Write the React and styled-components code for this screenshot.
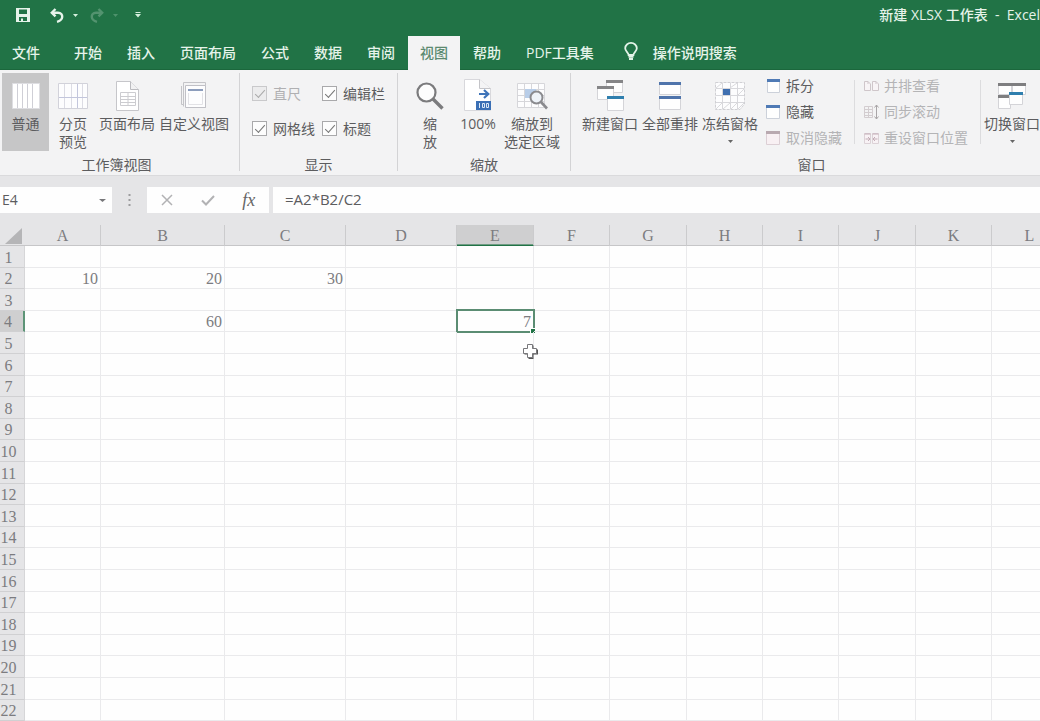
import React from "react";
import styled, { createGlobalStyle, css } from "styled-components";

const GREEN = "#217346";
const UI = `"Open Sans", "Noto Sans CJK SC", sans-serif`;
const SHEET = `"Liberation Serif", "Noto Sans CJK SC", serif`;

const GlobalStyle = createGlobalStyle`
  *, *::before, *::after { box-sizing: border-box; }
  body { margin: 0; font-family: ${UI}; font-size: 14px; color: #5c5c5e; background: #fefefe; }
  button, input { font: inherit; color: inherit; margin: 0; padding: 0; border: 0; background: none; }
  svg { display: block; flex: none; }
`;

const Page = styled.div`
  display: flex;
  flex-direction: column;
  height: 100vh;
  overflow: hidden;
`;

/* ---------- title bar and tabs ---------- */

const Header = styled.header`
  flex: none;
  background: ${GREEN};
  color: #e6f3ea;
  border-bottom: 1px solid #1b673c;
`;

const TitleBar = styled.div`
  display: flex;
  align-items: center;
  justify-content: space-between;
  height: 30px;
  margin-bottom: 6px;
  padding-left: 16px;
`;

const QuickAccess = styled.div`
  display: flex;
  align-items: center;
`;

const QuickButton = styled.button`
  display: flex;
  margin-right: ${(p) => p.$gap || 0}px;
  opacity: ${(p) => (p.disabled ? 0.25 : 1)};
`;

const Title = styled.div`
  white-space: pre;
  font-weight: 500;
  line-height: 20px;
`;

const Tabs = styled.nav`
  display: flex;
  gap: 1px;
  height: 33px;
`;

const Tab = styled.button`
  display: flex;
  align-items: center;
  gap: 15px;
  padding: 0 12px 2px;
  white-space: nowrap;
  font-weight: 500;
  ${(p) => p.$file && css`width: 61px;`}
  ${(p) => p.$tell && css`margin-left: 5px;`}
  ${(p) => p.$active && css`
    height: 34px;
    background: #f3f3f4;
    color: #5c8a70;
  `}
`;

/* ---------- ribbon ---------- */

const Ribbon = styled.section`
  flex: none;
  display: flex;
  padding-top: 3px;
  height: 106px;
  overflow: hidden;
  background: #f3f3f4;
  border-bottom: 1px solid #dadadc;
`;

const Group = styled.div`
  flex: none;
  display: flex;
  flex-direction: column;
  align-items: center;
  gap: 5px;
  height: 98px;
  padding: ${(p) => p.$pad};
  border-right: ${(p) => (p.$last ? "0" : "1px solid #d3d3d5")};
`;

const GroupBody = styled.div`
  flex: none;
  display: flex;
  height: 78px;
`;

const GroupLabel = styled.div`
  flex: none;
  line-height: 18px;
`;

const BigButton = styled.button`
  display: flex;
  flex-direction: column;
  align-items: center;
  gap: 3px;
  width: ${(p) => p.$w}px;
  padding-top: 6px;
  line-height: 18px;
  white-space: pre;
  background: ${(p) => (p.$active ? "#c6c6c7" : "transparent")};
`;

const MenuMark = styled.span`
  padding-top: 4px;
`;

const IconBox = styled.span`
  display: grid;
  place-items: center;
  height: 33px;
`;

const CheckGrid = styled.div`
  display: grid;
  grid-template-columns: auto auto;
  grid-template-rows: 35px 35px;
  column-gap: 7px;
  align-items: center;
  padding-top: 3px;
`;

const CheckLabel = styled.label`
  display: flex;
  align-items: center;
  gap: 6px;
  line-height: 18px;
  white-space: nowrap;
  color: ${(p) => (p.$off ? "#b0b0b2" : "inherit")};
`;

const CheckBox = styled.input`
  appearance: none;
  display: grid;
  place-items: center;
  width: 15px;
  height: 15px;
  border: 1px solid #a9a9ab;
  background: #fdfdfd;
  &:disabled { border-color: #c9c9cb; background: #ececed; }
  &:checked::before {
    content: "";
    width: 10px;
    height: 5px;
    margin-bottom: 3px;
    border-left: 1px solid #777;
    border-bottom: 1px solid #777;
    transform: rotate(-48deg);
  }
  &:disabled:checked::before { border-color: #aaa; }
`;

const Stack = styled.div`
  display: flex;
  flex-direction: column;
  padding-left: ${(p) => p.$left}px;
  padding-right: 12px;
`;

const SmallButton = styled.button`
  display: flex;
  align-items: center;
  gap: 5px;
  height: 26px;
  line-height: 18px;
  white-space: nowrap;
  &:disabled { color: #b4b4b6; }
`;

const Divider = styled.span`
  width: 1px;
  height: 64px;
  margin-top: 7px;
  background: #dcdcde;
`;

/* ---------- formula bar ---------- */

const FormulaBar = styled.section`
  flex: none;
  display: flex;
  height: 49px;
  padding: 11px 0 12px;
  background: #e5e5e7;
`;

const NameBox = styled.div`
  display: flex;
  align-items: center;
  width: 112px;
  padding: 0 6px 0 2px;
  background: #fefefe;
`;

const TextField = styled.input`
  flex: 1;
  min-width: 0;
  height: 26px;
  padding-bottom: 2px;
  outline: 0;
`;

const Grip = styled.span`
  display: grid;
  place-items: center;
  width: 35px;
`;

const FormulaTools = styled.div`
  display: flex;
  align-items: center;
  justify-content: space-around;
  width: 122px;
  margin-right: 4px;
  background: #fefefe;
`;

const FormulaField = styled(TextField)`
  padding-left: 12px;
  font-size: 15px;
  background: #fefefe;
`;

const ToolButton = styled.button`
  display: grid;
  place-items: center;
  width: 24px;
  height: 24px;
  font: italic 18px/20px "Liberation Serif", serif;
  color: #666;
`;

/* ---------- sheet ---------- */

const SheetArea = styled.main`
  flex: 1;
  min-height: 0;
  overflow: hidden;
`;

const Sheet = styled.table`
  width: 100%;
  table-layout: fixed;
  border-collapse: separate;
  border-spacing: 0;
  font: 16px/18px ${SHEET};
  color: #7c7c80;
`;

const Col = styled.col`
  width: ${(p) => p.$w}px;
`;

const Corner = styled.td`
  padding: 2px 2px 0 5px;
  background: #e5e5e7;
  border-bottom: 1px solid #c6c6c8;
`;

const ColHead = styled.th`
  height: 21px;
  padding: 2px 0 0;
  font-weight: 400;
  background: ${(p) => (p.$active ? "#cfcfd0" : "#e5e5e7")};
  border-right: 1px solid #cbcbcd;
  border-bottom: 1px solid ${(p) => (p.$active ? GREEN : "#c6c6c8")};
  box-shadow: ${(p) => (p.$active ? "inset 0 -1px #6f9c83" : "none")};
`;

const Row = styled.tr`
  height: 22px;
  &:nth-child(5n + 2), &:nth-child(5n + 4) { height: 21px; }
`;

const RowHead = styled.th`
  padding: 2px 7px 0 0;
  font-weight: 400;
  background: ${(p) => (p.$active ? "#cfcfd0" : "#e5e5e7")};
  border-right: ${(p) => (p.$active ? `2px solid #5d9477` : "1px solid #d6d6d8")};
  border-bottom: 1px solid #d0d0d2;
`;

const Cell = styled.td`
  position: relative;
  padding: 2px 2px 0 0;
  text-align: right;
  border-right: 1px solid #eaeaec;
  border-bottom: 1px solid #eaeaec;
`;

const Selection = styled.span`
  position: absolute;
  inset: -2px -2px -2px -1px;
  border: 2px solid #5b8d73;
  &::after {
    content: "";
    position: absolute;
    right: -2px;
    bottom: -2px;
    width: 5px;
    height: 5px;
    background: ${GREEN};
    border: solid #fff;
    border-width: 1px 0 0 1px;
  }
`;

const Pointer = styled.svg`
  position: absolute;
  top: 32px;
  left: 65px;
  z-index: 1;
`;

/* ---------- icons ---------- */

const SaveIcon = () => (
  <svg width="14" height="14" viewBox="0 0 14 14">
    <path fill="#e6f3ea" fillRule="evenodd" d="M0 0H14V14H0ZM3 1.5V6H11V1.5ZM3 9V13H5V10.5H7V13H11V9Z" />
  </svg>
);
const UndoIcon = ({ flip }) => (
  <svg width="14" height="15" viewBox="0 0 14 15">
    <g transform={flip ? "matrix(-1 0 0 1 14 0)" : undefined} fill="none" stroke="#e6f3ea" strokeWidth="2.4">
      <path d="M5.5 1L1.8 4.7L5.5 8.4" />
      <path d="M2 4.7H8C11 4.7 12.4 6.8 12.2 9C12 11.5 10 13 7 13.8" />
    </g>
  </svg>
);
const Caret = ({ color = "#666", w = 5 }) => (
  <svg width={w} height="3" viewBox="0 0 6 3" preserveAspectRatio="none"><path d="M0 0H6L3 3Z" fill={color} /></svg>
);
const CustomizeIcon = () => (
  <svg width="6" height="6" viewBox="0 0 6 6"><path d="M0.5 0H5.5V1H0.5ZM0 2H6L3 5.5Z" fill="#d5f0dd" /></svg>
);
const BulbIcon = () => (
  <svg width="14" height="19" viewBox="0 0 14 19" fill="none" stroke="#e3f4e8" strokeWidth="1.8">
    <path d="M4.6 13C4.6 10.5 1.2 9.5 1.2 6.3A5.8 5.4 0 0 1 12.8 6.3C12.8 9.5 9.4 10.5 9.4 13Z" />
    <path d="M4.5 14.8H9.5M5 17H9" strokeWidth="1.8" />
  </svg>
);
const NormalIcon = () => (
  <svg width="28" height="26" viewBox="0 0 28 26">
    <path d="M0.5 0.5H27.5V25.5H0.5Z" fill="#fff" stroke="#dedee2" />
    <path d="M5.5 1V25M10.5 1V25M15.5 1V25M20.5 1V25" stroke="#cfcfd6" />
  </svg>
);
const PageBreakIcon = () => (
  <svg width="30" height="26" viewBox="0 0 30 26">
    <path d="M0.5 0.5H29.5V25.5H0.5Z" fill="#fdfdfe" stroke="#d2d2da" />
    <path d="M6.5 1V25M13.5 1V25M24.5 1V25" stroke="#dcdce4" />
    <path d="M19.5 1V25M1 14.5H29" stroke="#c3c6dc" />
  </svg>
);
const PageLayoutIcon = () => (
  <svg width="23" height="30" viewBox="0 0 23 30">
    <path d="M0.5 0.5H14.5L22.5 8.5V29.5H0.5Z" fill="#fff" stroke="#c6c6ca" />
    <path d="M14.5 0.5V8.5H22.5" fill="#f2f2f3" stroke="#bcbcc0" />
    <path d="M4.5 11.5H19.5V24.5H4.5ZM4.5 15.5H19.5M4.5 18.5H19.5M4.5 21.5H19.5M12 11.5V24.5" fill="none" stroke="#ccccd0" />
  </svg>
);
const CustomViewIcon = () => (
  <svg width="27" height="27" viewBox="0 0 27 27">
    <path d="M2.5 0.5H24.5V4M0.5 4V22.5H3M24.5 4V26M2.5 0.5V24.5" fill="none" stroke="#c4c4c8" />
    <path d="M4.5 3.5H24.5V25.5H4.5Z" fill="#fdfdfe" stroke="#c0c0c6" />
    <path d="M7 8H22" stroke="#8c9dbc" strokeWidth="2" />
    <path d="M7.5 11V22.5H21.5V11" fill="none" stroke="#e2e2e6" />
  </svg>
);
const ZoomIcon = () => (
  <svg width="28" height="28" viewBox="0 0 28 28">
    <circle cx="10.5" cy="10.5" r="9" fill="#fdfdfd" stroke="#7b7b7d" strokeWidth="2.2" />
    <path d="M17 17L26.5 26.5" stroke="#7b7b7d" strokeWidth="3.4" />
  </svg>
);
const HundredIcon = () => (
  <svg width="28" height="33" viewBox="0 0 28 33">
    <path d="M0.5 0.5H15.5L26.5 9.5V31.5H0.5Z" fill="#fff" stroke="#d8d8dc" />
    <path d="M15.5 0.5V9.5H26.5" fill="#f4f4f5" stroke="#c4c4c8" />
    <path d="M15 15H24M20 11L24.3 15L20 19" fill="none" stroke="#3f74b8" strokeWidth="2.2" />
    <path d="M12 22H27V31H12Z" fill="#3a6fb5" />
    <path d="M15.5 24V29M18.5 24.5H20.5V28.5H18.5ZM22.5 24.5H24.5V28.5H22.5Z" fill="none" stroke="#dce8f6" />
  </svg>
);
const ZoomSelectionIcon = () => (
  <svg width="31" height="28" viewBox="0 0 31 28">
    <path d="M0.5 1.5H27.5V25.5H0.5Z" fill="#fdfdfe" />
    <path d="M0.5 1.5H27.5V25.5H0.5ZM0.5 7.5H27.5M0.5 13.5H27.5M0.5 19.5H27.5M7.5 1.5V25.5M14.5 1.5V25.5M21.5 1.5V25.5" fill="none" stroke="#d6d6da" />
    <path d="M8 7H19V16H8Z" fill="#b8cde8" />
    <circle cx="19.5" cy="15.5" r="6" fill="#eef3f9" stroke="#8a8a8e" strokeWidth="2" />
    <path d="M24 20L30 26.5" stroke="#8a8a8e" strokeWidth="2.6" />
  </svg>
);
const Win = ({ x, y, w, h, bar }) => (
  <>
    <path d={`M${x + 0.5} ${y + 0.5}h${w - 1}v${h - 1}h${1 - w}Z`} fill="#fefefe" stroke="#d4d4d8" />
    <path d={`M${x} ${y}h${w}v3h${-w}Z`} fill={bar} />
  </>
);
const NewWindowIcon = () => (
  <svg width="27" height="31" viewBox="0 0 27 31">
    <Win x={9} y={0} w={17} h={13} bar="#858587" />
    <Win x={0} y={6} w={17} h={14} bar="#858587" />
    <Win x={10} y={16} w={17} h={15} bar="#2f7fae" />
  </svg>
);
const ArrangeIcon = () => (
  <svg width="22" height="28" viewBox="0 0 22 28">
    <Win x={0} y={0} w={22} h={13} bar="#4f74ab" />
    <Win x={0} y={14} w={22} h={14} bar="#4f74ab" />
  </svg>
);
const FreezeIcon = () => (
  <svg width="30" height="28" viewBox="0 0 30 28">
    <path d="M0.5 0.5H29.5V22L25 27.5H0.5Z" fill="#fdfdfe" stroke="#d0d0d4" strokeDasharray="3 1" />
    <path d="M1 6.5H29M1 13.5H29M1 20.5H29M7.5 1V27M15.5 1V27M22.5 1V27" stroke="#d8d8dc" />
    <path d="M1 6L7 1M15 6L22 1M1 27L7 21M8 27L15 21M16 27L22 21M23 27L29 21M23 13L29 7" stroke="#dadadd" />
    <path d="M8 7H15V13H8Z" fill="#3f6fb0" />
  </svg>
);
const SwitchIcon = () => (
  <svg width="28" height="26" viewBox="0 0 28 26">
    <Win x={0} y={0} w={14} h={12} bar="#7e7e80" />
    <Win x={14} y={0} w={14} h={12} bar="#7e7e80" />
    <Win x={0} y={12} w={13} h={14} bar="#7e7e80" />
    <Win x={11} y={9} w={14} h={13} bar="#2f7fae" />
  </svg>
);
const PaneIcon = ({ w = 14, bar = "#4f7ab5", fill = "#fefefe", line = "#ccd1da" }) => (
  <svg width="15" height="14" viewBox="0 0 15 14">
    <path d={`M${14 - w}.5 0.5H13.5V13.5H${14 - w}.5Z`} fill={fill} stroke={line} />
    <path d={`M${14 - w} 0H14V3H${14 - w}Z`} fill={bar} />
  </svg>
);
const SideBySideIcon = () => (
  <svg width="15" height="12" viewBox="0 0 15 12" fill="#f8f4f6" stroke="#cfc6ca">
    <path d="M0.5 1.5H4L6.5 4V10.5H0.5ZM8.5 1.5H12L14.5 4V10.5H8.5ZM4 1.5V4M12 1.5V4" />
  </svg>
);
const SyncIcon = () => (
  <svg width="15" height="16" viewBox="0 0 15 16" fill="none" stroke="#d3cdd0">
    <path d="M0.5 2.5H8.5V13.5H0.5ZM0.5 5.5H8.5M0.5 8.5H8.5M0.5 11.5H8.5M4.5 2.5V13.5" />
    <path d="M12.5 1V15M10.5 3.5L12.5 1L14.5 3.5M10.5 12.5L12.5 15L14.5 12.5" stroke="#a9a5a7" />
  </svg>
);
const ResetIcon = () => (
  <svg width="15" height="11" viewBox="0 0 15 11" fill="#f8f2f5" stroke="#dcd2d7">
    <path d="M0.5 0.5H6.5V10.5H0.5ZM8.5 0.5H14.5V10.5H8.5Z" />
    <path d="M0.5 1H6.5M8.5 1H14.5M1.5 6H6M4 4L6 6L4 8M13.5 6H9M11 4L9 6L11 8" stroke="#c2adb6" fill="none" />
  </svg>
);
const DotsIcon = () => (
  <svg width="3" height="13" viewBox="0 0 3 13"><path d="M1.5 0V13" stroke="#9c9c9e" strokeWidth="2" strokeDasharray="2 3" /></svg>
);
const CrossIcon = () => (
  <svg width="12" height="12" viewBox="0 0 12 12"><path d="M1 1L11 11M11 1L1 11" stroke="#b2b2b4" strokeWidth="1.5" /></svg>
);
const TickIcon = () => (
  <svg width="14" height="11" viewBox="0 0 14 11"><path d="M1 5.5L5 9.5L13 1" fill="none" stroke="#b2b2b4" strokeWidth="2" /></svg>
);
const CornerIcon = () => (
  <svg width="17" height="16" viewBox="0 0 17 16"><path d="M17 0V16H0Z" fill="#b5b5b7" /></svg>
);
const PlusPointer = () => (
  <Pointer width="17" height="17" viewBox="0 0 17 17">
    <path d="M6.5 2.5H11.5V6.5H16V11.5H11.5V16H6.5V11.5H2.5V6.5H6.5Z" fill="#555" />
    <path d="M5.5 1.5H10.5V5.5H14.5V10.5H10.5V14.5H5.5V10.5H1.5V5.5H5.5Z" fill="#fff" stroke="#77777a" />
  </Pointer>
);

/* ---------- data ---------- */

const TABS = ["开始", "插入", "页面布局", "公式", "数据", "审阅", "视图", "帮助", "PDF工具集"];
const COLUMNS = [
  ["A", 76], ["B", 124], ["C", 121], ["D", 111], ["E", 77], ["F", 76],
  ["G", 77], ["H", 76], ["I", 76], ["J", 77], ["K", 76], ["L", 76],
];
const ROWS = Array.from({ length: 22 }, (_, i) => i + 1);
const VALUES = { A2: 10, B2: 20, C2: 30, B4: 60, E4: 7 };

const Big = ({ icon, label, w, active, menu }) => (
  <BigButton $w={w} $active={active}>
    <IconBox>{icon}</IconBox>
    <span>{label}</span>
    {menu && <MenuMark><Caret /></MenuMark>}
  </BigButton>
);

const Check = ({ label, disabled }) => (
  <CheckLabel $off={disabled}>
    <CheckBox type="checkbox" defaultChecked disabled={disabled} />
    {label}
  </CheckLabel>
);

const Small = ({ icon, label, disabled }) => (
  <SmallButton disabled={disabled}>{icon}{label}</SmallButton>
);

export default function App() {
  return (
    <Page>
      <GlobalStyle />
      <Header>
        <TitleBar>
          <QuickAccess>
            <QuickButton aria-label="保存" $gap={20}><SaveIcon /></QuickButton>
            <QuickButton aria-label="撤消" $gap={9}><UndoIcon /></QuickButton>
            <QuickButton aria-label="撤消列表" $gap={12}><Caret color="#d5f0dd" /></QuickButton>
            <QuickButton aria-label="恢复" disabled $gap={9}><UndoIcon flip /></QuickButton>
            <QuickButton aria-label="恢复列表" disabled $gap={17}><Caret color="#d5f0dd" /></QuickButton>
            <QuickButton aria-label="自定义"><CustomizeIcon /></QuickButton>
          </QuickAccess>
          <Title>{"新建 XLSX 工作表  -  Excel"}</Title>
        </TitleBar>
        <Tabs>
          <Tab $file>文件</Tab>
          {TABS.map((t) => <Tab key={t} $active={t === "视图"}>{t}</Tab>)}
          <Tab $tell><BulbIcon />操作说明搜索</Tab>
        </Tabs>
      </Header>

      <Ribbon>
        <Group $pad="0 8px 0 2px">
          <GroupBody>
            <Big w={47} active icon={<NormalIcon />} label="普通" />
            <Big w={48} icon={<PageBreakIcon />} label={"分页\n预览"} />
            <Big w={60} icon={<PageLayoutIcon />} label="页面布局" />
            <Big w={74} icon={<CustomViewIcon />} label="自定义视图" />
          </GroupBody>
          <GroupLabel>工作簿视图</GroupLabel>
        </Group>
        <Group $pad="0 12px">
          <GroupBody>
            <CheckGrid>
              <Check label="直尺" disabled />
              <Check label="编辑栏" />
              <Check label="网格线" />
              <Check label="标题" />
            </CheckGrid>
          </GroupBody>
          <GroupLabel>显示</GroupLabel>
        </Group>
        <Group $pad="0 9px">
          <GroupBody>
            <Big w={46} icon={<ZoomIcon />} label={"缩\n放"} />
            <Big w={50} icon={<HundredIcon />} label="100%" />
            <Big w={58} icon={<ZoomSelectionIcon />} label={"缩放到\n选定区域"} />
          </GroupBody>
          <GroupLabel>缩放</GroupLabel>
        </Group>
        <Group $pad="0 9px" $last>
          <GroupBody>
            <Big w={60} icon={<NewWindowIcon />} label="新建窗口" />
            <Big w={60} icon={<ArrangeIcon />} label="全部重排" />
            <Big w={60} icon={<FreezeIcon />} label="冻结窗格" menu />
            <Stack $left={6}>
              <Small icon={<PaneIcon w={13} />} label="拆分" />
              <Small icon={<PaneIcon />} label="隐藏" />
              <Small icon={<PaneIcon bar="#b9a9b0" fill="#f8f0f3" line="#dccfd5" />} label="取消隐藏" disabled />
            </Stack>
            <Divider />
            <Stack $left={9}>
              <Small icon={<SideBySideIcon />} label="并排查看" disabled />
              <Small icon={<SyncIcon />} label="同步滚动" disabled />
              <Small icon={<ResetIcon />} label="重设窗口位置" disabled />
            </Stack>
            <Divider />
            <Big w={62} icon={<SwitchIcon />} label="切换窗口" menu />
          </GroupBody>
          <GroupLabel>窗口</GroupLabel>
        </Group>
      </Ribbon>

      <FormulaBar>
        <NameBox>
          <TextField aria-label="名称框" defaultValue="E4" />
          <Caret w={7} color="#77777a" />
        </NameBox>
        <Grip><DotsIcon /></Grip>
        <FormulaTools>
          <ToolButton aria-label="取消"><CrossIcon /></ToolButton>
          <ToolButton aria-label="输入"><TickIcon /></ToolButton>
          <ToolButton>fx</ToolButton>
        </FormulaTools>
        <FormulaField aria-label="编辑栏" defaultValue="=A2*B2/C2" />
      </FormulaBar>

      <SheetArea>
        <Sheet>
          <colgroup>
            <Col $w={25} />
            {COLUMNS.map(([c, w]) => <Col key={c} $w={w} />)}
          </colgroup>
          <thead>
            <tr>
              <Corner><CornerIcon /></Corner>
              {COLUMNS.map(([c]) => <ColHead key={c} scope="col" $active={c === "E"}>{c}</ColHead>)}
            </tr>
          </thead>
          <tbody>
            {ROWS.map((r) => (
              <Row key={r}>
                <RowHead scope="row" $active={r === 4}>{r}</RowHead>
                {COLUMNS.map(([c]) => (
                  <Cell key={c}>
                    {VALUES[c + r]}
                    {c + r === "E4" && <><Selection /><PlusPointer /></>}
                  </Cell>
                ))}
              </Row>
            ))}
          </tbody>
        </Sheet>
      </SheetArea>
    </Page>
  );
}
